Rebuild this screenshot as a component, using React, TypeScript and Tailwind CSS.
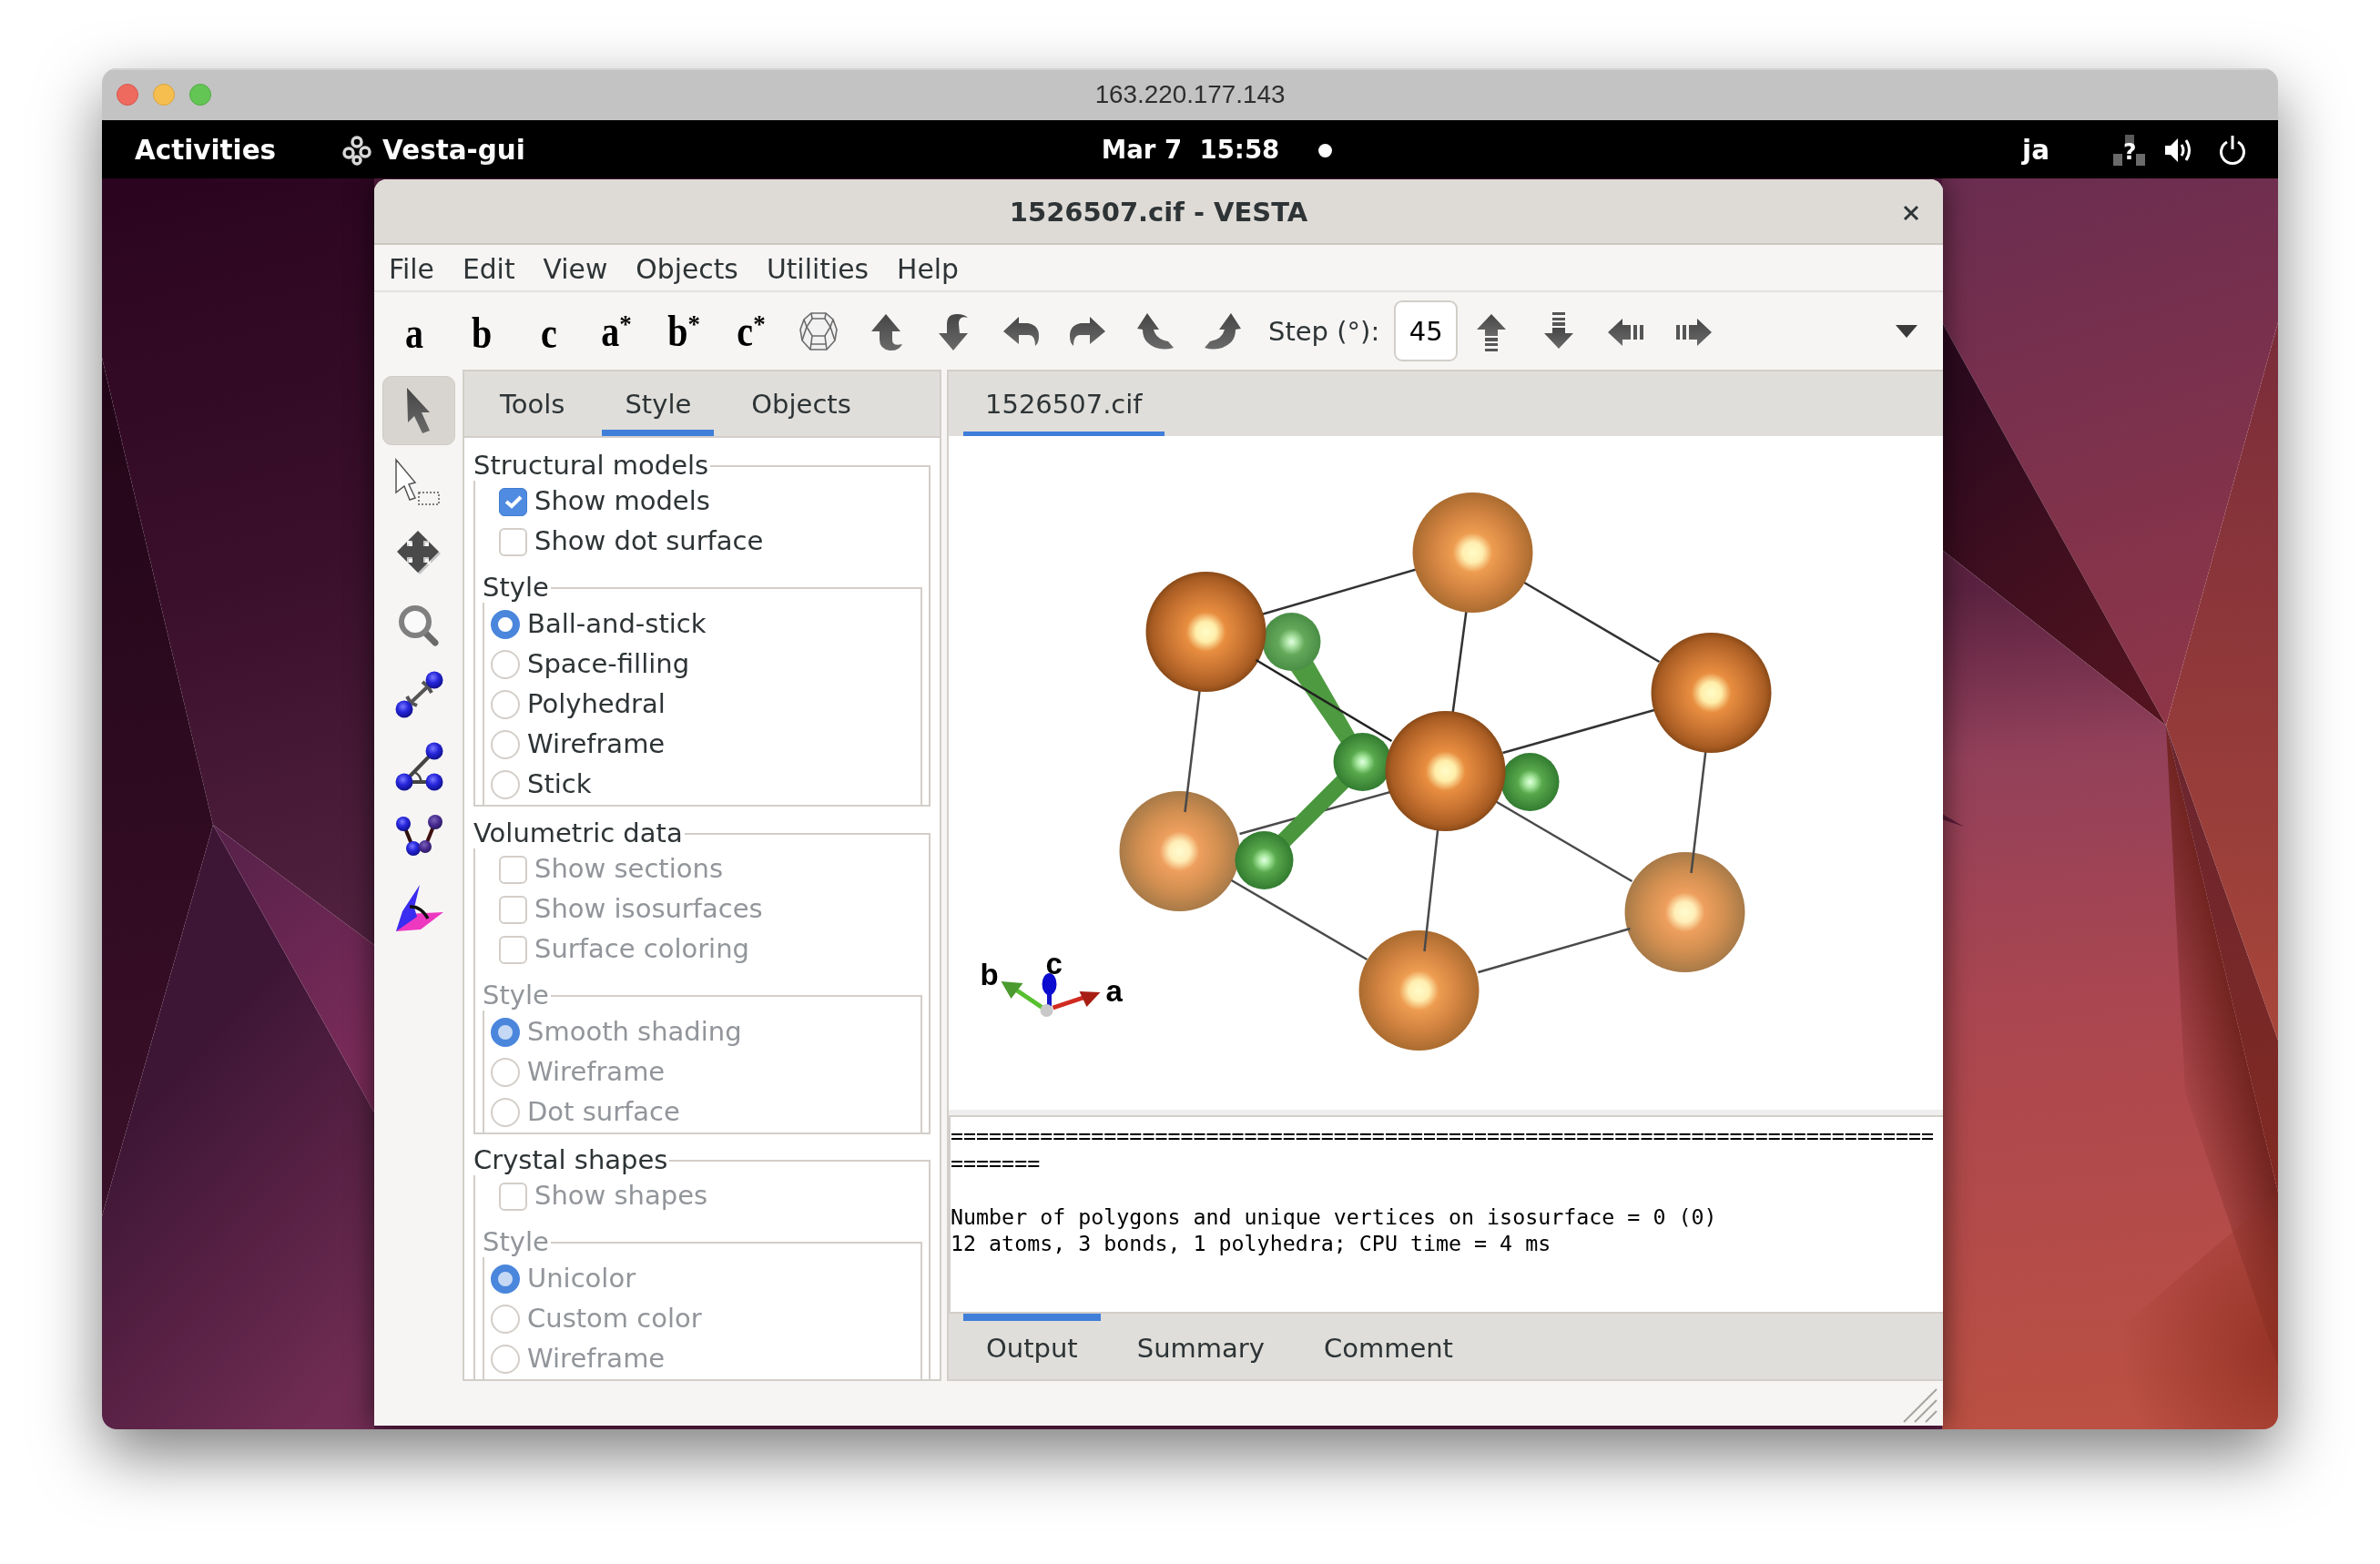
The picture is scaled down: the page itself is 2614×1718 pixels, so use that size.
const Frame = ({ label, disabled, inner, children, className }: { label: string; disabled?: boolean; inner?: boolean; children: React.ReactNode; className?: string }) => (
  <div className={`relative border-2 border-[#d3cec9] ${inner ? 'border-b-0 mx-[8px] mr-[7px] mt-[28px] pt-[17px]' : 'pt-[16px]'} ${className ?? ''}`}>
    <span className={`absolute left-[-2px] top-[-19px] h-[34px] pr-[2px] bg-white leading-[34px] whitespace-nowrap ${disabled ? 'text-[#92959a]' : 'text-[#2e3436]'}`}>{label}</span>
    {children}
  </div>
);

const Check = ({ label, checked, disabled }: { label: string; checked?: boolean; disabled?: boolean }) => (
  <div className={`flex items-center h-[44px] pl-[26px] ${disabled ? 'text-[#92959a]' : 'text-[#2e3436]'}`}>
    {checked ? (
      <span className="flex items-center justify-center w-[31px] h-[31px] rounded-[6px] bg-[#4f8be0] border border-[#3f7ccf]">
        <svg width="24" height="22" viewBox="0 0 24 22"><path d="M4 11 L10 16 L20 6" fill="none" stroke="#fff" strokeWidth="4" /></svg>
      </span>
    ) : (
      <span className="w-[31px] h-[31px] rounded-[6px] bg-white border-2 border-[#d3cec9]" />
    )}
    <span className="ml-[8px]">{label}</span>
  </div>
);

const Radio = ({ label, checked, disabled }: { label: string; checked?: boolean; disabled?: boolean }) => (
  <div className={`flex items-center h-[44px] pl-[7px] ${disabled ? 'text-[#92959a]' : 'text-[#2e3436]'}`}>
    {checked ? (
      <span className={`w-[32px] h-[32px] rounded-full border-[8px] border-[#4a86dc] ${disabled ? 'bg-[#c6d9f4]' : 'bg-white'}`} />
    ) : (
      <span className="w-[32px] h-[32px] rounded-full bg-white border-2 border-[#d3cec9]" />
    )}
    <span className="ml-[8px]">{label}</span>
  </div>
);

const Wallpaper = () => (
  <svg className="absolute inset-0 w-full h-full" viewBox="112 196 2390 1374" preserveAspectRatio="none">
    <defs>
      <linearGradient id="wlTop" gradientUnits="userSpaceOnUse" x1="200" y1="196" x2="411" y2="1040">
        <stop offset="0" stopColor="#2b0520" />
        <stop offset="0.5" stopColor="#3a0f2b" />
        <stop offset="1" stopColor="#522240" />
      </linearGradient>
      <linearGradient id="wlDark" gradientUnits="userSpaceOnUse" x1="112" y1="393" x2="180" y2="1336">
        <stop offset="0" stopColor="#220518" />
        <stop offset="1" stopColor="#3a1029" />
      </linearGradient>
      <linearGradient id="wlWedge" gradientUnits="userSpaceOnUse" x1="234" y1="906" x2="411" y2="1150">
        <stop offset="0" stopColor="#56214a" />
        <stop offset="1" stopColor="#792b58" />
      </linearGradient>
      <linearGradient id="wlLow" gradientUnits="userSpaceOnUse" x1="130" y1="1250" x2="400" y2="1500">
        <stop offset="0" stopColor="#3e1635" />
        <stop offset="1" stopColor="#702c53" />
      </linearGradient>
      <linearGradient id="wrTop" gradientUnits="userSpaceOnUse" x1="2200" y1="196" x2="2379" y2="797">
        <stop offset="0" stopColor="#6b2d50" />
        <stop offset="1" stopColor="#8f3648" />
      </linearGradient>
      <linearGradient id="wrDark" gradientUnits="userSpaceOnUse" x1="2133" y1="430" x2="2379" y2="797">
        <stop offset="0" stopColor="#2c0a1f" />
        <stop offset="1" stopColor="#55141f" />
      </linearGradient>
      <linearGradient id="wrWedge" gradientUnits="userSpaceOnUse" x1="2460" y1="354" x2="2480" y2="1143">
        <stop offset="0" stopColor="#7a2c3a" />
        <stop offset="1" stopColor="#a8463a" />
      </linearGradient>
      <linearGradient id="wrFold" gradientUnits="userSpaceOnUse" x1="2379" y1="797" x2="2502" y2="1310">
        <stop offset="0" stopColor="#6a2530" />
        <stop offset="1" stopColor="#822a22" />
      </linearGradient>
      <linearGradient id="wrLow" gradientUnits="userSpaceOnUse" x1="2230" y1="640" x2="2310" y2="1560">
        <stop offset="0" stopColor="#5a2240" />
        <stop offset="0.2" stopColor="#92405a" />
        <stop offset="0.5" stopColor="#aa4650" />
        <stop offset="1" stopColor="#bb5043" />
      </linearGradient>
      <linearGradient id="wrBand" gradientUnits="userSpaceOnUse" x1="2440" y1="1050" x2="2360" y2="1069">
        <stop offset="0" stopColor="#722420" stopOpacity="1" />
        <stop offset="1" stopColor="#722420" stopOpacity="0" />
      </linearGradient>
      <radialGradient id="wrCorner" gradientUnits="userSpaceOnUse" cx="2520" cy="1480" r="190">
        <stop offset="0" stopColor="#8e2e20" stopOpacity="0.9" />
        <stop offset="1" stopColor="#8e2e20" stopOpacity="0" />
      </radialGradient>
    </defs>
    <polygon points="112,196 411,196 411,1038 234,906 112,393" fill="url(#wlTop)" />
    <polygon points="112,393 234,906 112,1336" fill="url(#wlDark)" />
    <polygon points="234,906 411,1222 411,1570 112,1570 112,1336" fill="url(#wlLow)" />
    <polygon points="234,906 411,1038 411,1222" fill="url(#wlWedge)" />
    <rect x="411" y="196" width="1722" height="1374" fill="#5a1e44" />
    <polygon points="2133,196 2502,196 2502,354 2379,797 2133,354" fill="url(#wrTop)" />
    <polygon points="2133,354 2379,797 2133,604" fill="url(#wrDark)" />
    <polygon points="2133,604 2379,797 2502,1310 2502,1570 2133,1570" fill="url(#wrLow)" />
    <polygon points="2379,797 2502,1310 2502,1500 2400,1200" fill="url(#wrBand)" />
    <polygon points="2502,1310 2502,1570 2200,1570" fill="url(#wrCorner)" />
    <polygon points="2502,354 2379,797 2502,1143" fill="url(#wrWedge)" />
    <polygon points="2379,797 2502,1143 2502,1310" fill="url(#wrFold)" />
    <polygon points="2133,894 2157,908 2133,900" fill="#5c1c3a" />
  </svg>
);

const Defs = () => (
  <svg className="absolute w-0 h-0">
    <defs>
      <linearGradient id="ig" x1="0" y1="0" x2="0" y2="1">
        <stop offset="0" stopColor="#454545" />
        <stop offset="1" stopColor="#6a6a6a" />
      </linearGradient>
      <radialGradient id="ball" cx="0.42" cy="0.35" r="0.65">
        <stop offset="0" stopColor="#7878ff" />
        <stop offset="0.5" stopColor="#2626dc" />
        <stop offset="1" stopColor="#10108c" />
      </radialGradient>
      <radialGradient id="ballP" cx="0.42" cy="0.35" r="0.65">
        <stop offset="0" stopColor="#7a60b8" />
        <stop offset="0.6" stopColor="#45288e" />
        <stop offset="1" stopColor="#2a1a60" />
      </radialGradient>
      <radialGradient id="atomDark">
        <stop offset="0" stopColor="#fffcc8" />
        <stop offset="0.17" stopColor="#ffeeaa" />
        <stop offset="0.33" stopColor="#e88e40" />
        <stop offset="0.68" stopColor="#c47030" />
        <stop offset="0.9" stopColor="#a85c22" />
        <stop offset="1" stopColor="#8a4a18" />
      </radialGradient>
      <radialGradient id="atomMid">
        <stop offset="0" stopColor="#fffcc8" />
        <stop offset="0.17" stopColor="#ffeeb0" />
        <stop offset="0.33" stopColor="#ee9c50" />
        <stop offset="0.68" stopColor="#d08240" />
        <stop offset="1" stopColor="#ab6c30" />
      </radialGradient>
      <radialGradient id="atomLight">
        <stop offset="0" stopColor="#fffcd0" />
        <stop offset="0.17" stopColor="#ffeeb8" />
        <stop offset="0.33" stopColor="#ee9f5e" />
        <stop offset="0.68" stopColor="#d08e50" />
        <stop offset="1" stopColor="#a87a48" />
      </radialGradient>
      <radialGradient id="green">
        <stop offset="0" stopColor="#e2ffe2" />
        <stop offset="0.18" stopColor="#a8e8a0" />
        <stop offset="0.42" stopColor="#58a84c" />
        <stop offset="1" stopColor="#327c30" />
      </radialGradient>
      <radialGradient id="greenPale">
        <stop offset="0" stopColor="#e2ffe2" />
        <stop offset="0.2" stopColor="#a8e0a0" />
        <stop offset="0.45" stopColor="#64a85a" />
        <stop offset="1" stopColor="#4a8e46" />
      </radialGradient>
    </defs>
  </svg>
);

const Ic = ({ w = 44, children }: { w?: number; children: React.ReactNode }) => (
  <svg width={w} height="48" viewBox={`0 0 ${w} 48`}>{children}</svg>
);

const toolbarIcons = [
  <Ic key="poly">
    <g fill="none" stroke="#6b6b6b" strokeWidth="1.6">
      <polygon points="14,4 30,4 38,11 42,22 40,34 31,44 13,44 4,34 2,22 6,11" fill="#f2f2f2" />
      <polygon points="15,10 29,10 35,19 29,29 15,29 9,19" />
      <path d="M14 4 L15 10 M30 4 L29 10 M6 11 L9 19 M38 11 L35 19 M15 29 L13 44 M29 29 L31 44 M9 19 L4 34 M35 19 L40 34 M13 38 H31" />
    </g>
  </Ic>,
  <Ic key="up"><path d="M22 5 L38 24 L29 24 L29 33 Q29 41 40 38 Q36 46 26 45 Q15 43 15 33 L15 24 L6 24 Z" fill="url(#ig)" /></Ic>,
  <Ic key="down"><path d="M22 45 L6 26 L15 26 L15 16 Q15 5 26 5 Q34 5 38 9 Q28 6 28 16 L29 26 L38 26 Z" fill="url(#ig)" /></Ic>,
  <Ic key="left"><path d="M3 24 L20 8 L20 15 L30 15 Q42 17 42 29 Q42 37 38 40 Q38 27 30 28 L20 28 L20 38 Z" fill="url(#ig)" /></Ic>,
  <Ic key="right"><path d="M41 24 L24 8 L24 15 L14 15 Q2 17 2 29 Q2 37 6 40 Q6 27 14 28 L24 28 L24 38 Z" fill="url(#ig)" /></Ic>,
  <Ic key="ccw"><path d="M13 4 L26 22 L20 22 Q23 33 36 35 L42 42 Q25 47 13 36 Q8 31 8 22 L2 21 Z" fill="url(#ig)" /></Ic>,
  <Ic key="cw"><path d="M31 4 L18 22 L24 22 Q21 33 8 35 L2 42 Q19 47 31 36 Q36 31 36 22 L42 21 Z" fill="url(#ig)" /></Ic>,
];

const stepIcons = [
  <Ic key="su">
    <path d="M22 5 L38 22 L29 22 L29 29 L15 29 L15 22 L6 22 Z" fill="url(#ig)" />
    <path d="M15 31 H29 V35 H15 Z M15 37 H29 V40 H15 Z M15 43 H29 V46 H15 Z" fill="#555" />
  </Ic>,
  <Ic key="sd">
    <path d="M15 3 H29 V6 H15 Z M15 9 H29 V12 H15 Z M15 14 H29 V18 H15 Z" fill="#555" />
    <path d="M22 43 L38 26 L29 26 L29 20 L15 20 L15 26 L6 26 Z" fill="url(#ig)" />
  </Ic>,
  <Ic key="sl">
    <path d="M2 25 L18 10 L18 17 L27 17 L27 33 L18 33 L18 40 Z" fill="url(#ig)" />
    <path d="M30 17 H34 V33 H30 Z M37 17 H41 V33 H37 Z" fill="#555" />
  </Ic>,
  <Ic key="sr">
    <path d="M3 17 H7 V33 H3 Z M10 17 H14 V33 H10 Z" fill="#555" />
    <path d="M42 25 L26 10 L26 17 L17 17 L17 33 L26 33 L26 40 Z" fill="url(#ig)" />
  </Ic>,
];

const railIcons = [
  <path key="a" d="M26 12 L51 39 L42 39 L51 59 L43 62 L34 43 L27 50 Z" fill="url(#ig)" />,
  <g key="b">
    <path d="M15 13 L36 38 L29 40 L36 55 L30 57 L24 42 L15 49 Z" fill="#fff" stroke="#555" strokeWidth="1.5" />
    <rect x="40" y="49" width="22" height="13" fill="none" stroke="#555" strokeWidth="1.5" strokeDasharray="2 2" />
  </g>,
  <g key="c">
    <path d="M41 15 L52 26 L47 26 L47 32 L53 32 L53 27 L64 38 L53 49 L53 44 L47 44 L47 50 L52 50 L41 61 L30 50 L35 50 L35 44 L29 44 L29 49 L18 38 L29 27 L29 32 L35 32 L35 26 L30 26 Z" fill="#c4c4c4" />
    <path d="M39 13 L50 24 L45 24 L45 30 L51 30 L51 25 L62 36 L51 47 L51 42 L45 42 L45 48 L50 48 L39 59 L28 48 L33 48 L33 42 L27 42 L27 47 L16 36 L27 25 L27 30 L33 30 L33 24 L28 24 Z" fill="#4a4a4a" />
  </g>,
  <g key="d">
    <path d="M48 47 L58 57" stroke="#6a6a6a" strokeWidth="7" strokeLinecap="round" />
    <circle cx="36" cy="34" r="15" fill="#fafafa" stroke="#808080" strokeWidth="6" />
  </g>,
  <g key="e">
    <path d="M31 45 L50 27 M27 38 L31 45 L38 48 M44 22 L50 27 L54 34" fill="none" stroke="#555" strokeWidth="4" />
    <circle cx="57" cy="20" r="9.5" fill="url(#ball)" />
    <circle cx="24" cy="52" r="9.5" fill="url(#ball)" />
  </g>,
  <g key="f">
    <path d="M24 53 L57 19 M24 53 H57" stroke="#444" strokeWidth="4" />
    <path d="M35 42 Q43 46 42 53" fill="none" stroke="#444" strokeWidth="2.5" />
    <circle cx="57" cy="19" r="9.5" fill="url(#ball)" />
    <circle cx="24" cy="53" r="9.5" fill="url(#ball)" />
    <circle cx="57" cy="53" r="9.5" fill="url(#ball)" />
  </g>,
  <g key="g">
    <path d="M23 21 L34 48" stroke="#301010" strokeWidth="4" />
    <path d="M58 19 L47 46" stroke="#401010" strokeWidth="4" />
    <circle cx="23" cy="21" r="8" fill="url(#ball)" />
    <circle cx="34" cy="48" r="8" fill="url(#ball)" />
    <circle cx="47" cy="46" r="7" fill="url(#ballP)" />
    <circle cx="58" cy="19" r="8" fill="url(#ballP)" />
  </g>,
  <g key="h">
    <polygon points="26,41 67,39 42,58 15,60" fill="#ee38c0" />
    <polygon points="41,9 35,34 38,44 15,60 22,38" fill="#3a2cf0" />
    <path d="M30 33 Q42 32 50 46" fill="none" stroke="#111" strokeWidth="3.5" />
  </g>,
];

const atoms = [
  { x: 1324, y: 695, g: 'atomDark' },
  { x: 1617, y: 608, g: 'atomMid' },
  { x: 1879, y: 762, g: 'atomDark' },
];

const Structure = () => (
  <svg className="w-full h-full" viewBox="1042 480 1091 740">
    <circle cx="1295" cy="936" r="66" fill="url(#atomLight)" />
    <circle cx="1850" cy="1003" r="66" fill="url(#atomLight)" />
    <circle cx="1558" cy="1089" r="66" fill="url(#atomMid)" />
    <g stroke="#4a4a4a" strokeWidth="2.5" fill="none">
      <path d="M1317 760 L1301 893" />
      <path d="M1873 825 L1857 960" />
      <path d="M1580 900 L1564 1046" />
      <path d="M1640 880 L1792 969" />
      <path d="M1790 1021 L1623 1069" />
      <path d="M1352 968 L1501 1055" />
      <path d="M1361 917 L1530 870" />
    </g>
    <g stroke="#333" strokeWidth="2.5" fill="none">
      <path d="M1385 676 L1560 625" />
      <path d="M1672 640 L1822 728" />
      <path d="M1610 672 L1595 785" />
      <path d="M1650 828 L1820 780" />
    </g>
    <polygon points="1408,724 1434,714 1505,838 1487,838" fill="#4e9a40" />
    <path d="M1496 838 L1388 946" stroke="#4a963c" strokeWidth="18" />
    <circle cx="1418" cy="706" r="32" fill="url(#greenPale)" />
    <circle cx="1496" cy="838" r="32" fill="url(#green)" />
    <circle cx="1680" cy="860" r="32" fill="url(#green)" />
    <circle cx="1388" cy="946" r="32" fill="url(#green)" />
    {atoms.map((a) => (
      <circle key={a.x} cx={a.x} cy={a.y} r="66" fill={`url(#${a.g})`} />
    ))}
    <path d="M1379 726 L1528 815" stroke="#222" strokeWidth="2.5" />
    <circle cx="1587" cy="848" r="66" fill="url(#atomDark)" />
    <g>
      <path d="M1149 1111 L1112 1086" stroke="#58c030" strokeWidth="5" />
      <path d="M1099 1079 L1123 1081 L1110 1098 Z" fill="#4a9a30" />
      <path d="M1152 1108 L1152 1085" stroke="#1414c8" strokeWidth="5" />
      <ellipse cx="1152" cy="1082" rx="8" ry="12" fill="#0c0cd0" />
      <path d="M1156 1108 L1192 1096" stroke="#d02a20" strokeWidth="5" />
      <path d="M1208 1091 L1185 1090 L1193 1107 Z" fill="#a81e14" />
      <circle cx="1149" cy="1111" r="7" fill="#c8c8c8" />
      <g fontFamily="'Liberation Sans', sans-serif" fontWeight="700" fontSize="33" fill="#000">
        <text x="1076" y="1083">b</text>
        <text x="1148" y="1071">c</text>
        <text x="1214" y="1101">a</text>
      </g>
    </g>
  </svg>
);

export default function App() {
  return (
    <div className="w-[2614px] h-[1718px] bg-white pt-[75px] pl-[112px] overflow-hidden font-['DejaVu_Sans',sans-serif] text-[29px] blur-[0.6px]">
      <Defs />
      <div className="flex flex-col w-[2390px] h-[1495px] rounded-[16px] overflow-hidden shadow-[0_28px_70px_rgba(0,0,0,0.5)]">
        {/* mac title */}
        <div className="relative flex items-center justify-center h-[57px] pb-[2px] bg-[#c3c3c3] border-t-2 border-[#d2d2d2]">
          <div className="absolute left-[16px] flex gap-[16px]">
            <span className="w-[24px] h-[24px] rounded-full bg-[#ee6a5f] border border-[#d5574c]" />
            <span className="w-[24px] h-[24px] rounded-full bg-[#f5be4f] border border-[#d9a53c]" />
            <span className="w-[24px] h-[24px] rounded-full bg-[#62c554] border border-[#52ac45]" />
          </div>
          <span className="font-['Liberation_Sans',sans-serif] text-[27.8px] text-[#2e2e2e]">163.220.177.143</span>
        </div>

        {/* gnome top bar */}
        <div className="flex items-center h-[64px] pt-[2px] bg-black text-white font-bold text-[29.4px] pl-[36px] pr-[36px]">
          <span>Activities</span>
          <svg className="ml-[73px]" width="32" height="34" viewBox="0 0 32 34">
            <g fill="none" stroke="#d8d8d8" strokeWidth="3.5">
              <circle cx="16" cy="8" r="5" />
              <circle cx="7" cy="20" r="5" />
              <circle cx="25" cy="19" r="5" />
              <circle cx="16" cy="28" r="4" />
            </g>
          </svg>
          <span className="ml-[12px]">Vesta-gui</span>
          <span className="ml-[633px] whitespace-pre text-[27.6px]">Mar 7  15:58</span>
          <span className="ml-[43px] w-[15px] h-[15px] rounded-full bg-white" />
          <span className="ml-auto">ja</span>
          <svg className="ml-[70px]" width="35" height="34" viewBox="0 0 35 34">
            <rect x="13" y="0" width="10" height="11" fill="#5a5a5a" />
            <rect x="0" y="21" width="10" height="13" fill="#6a6a6a" />
            <rect x="25" y="21" width="10" height="13" fill="#6a6a6a" />
            <text x="11" y="27" fontSize="25" fill="#fff" fontWeight="700">?</text>
          </svg>
          <svg className="ml-[22px]" width="31" height="30" viewBox="0 0 31 30">
            <path d="M0 10 H6 L14 2 V28 L6 20 H0 Z" fill="#fff" />
            <path d="M18 9 Q22 15 18 21 M23 4 Q30 15 23 26" fill="none" stroke="#fff" strokeWidth="3" />
          </svg>
          <svg className="ml-[29px]" width="28" height="32" viewBox="0 0 28 32">
            <path d="M8 7 A12.5 12.5 0 1 0 20 7" fill="none" stroke="#fff" strokeWidth="3" />
            <path d="M14 0 V15" stroke="#fff" strokeWidth="3" />
          </svg>
        </div>

        {/* desktop */}
        <div className="relative flex-1 pl-[299px] pt-[1px]">
          <Wallpaper />
          <div className="relative flex flex-col w-[1723px] h-[1369px] rounded-t-[14px] overflow-hidden bg-[#f6f5f4] text-[#2e3436] shadow-[0_0_30px_rgba(0,0,0,0.6)]">
            <div className="relative flex items-center justify-center h-[72px] pt-[3px] bg-[#dedbd7] border-b-2 border-[#cdc7c2] font-bold">
              <span>1526507.cif - VESTA</span>
              <svg className="absolute right-[26px]" width="18" height="18" viewBox="0 0 18 18">
                <path d="M2 2 L16 16 M16 2 L2 16" stroke="#2e3436" strokeWidth="3" />
              </svg>
            </div>
            <div className="flex items-center gap-[31px] h-[52px] pl-[16px] pt-[4px] text-[29.8px] border-b-2 border-[#e4e2df]">
              {['File', 'Edit', 'View', 'Objects', 'Utilities', 'Help'].map((m) => (
                <span key={m}>{m}</span>
              ))}
            </div>

            {/* toolbar */}
            <div className="flex items-center h-[85px] pl-[7px] pr-[28px]">
              {[['a'], ['b'], ['c'], ['a', '*'], ['b', '*'], ['c', '*']].map(([l, s], i) => (
                <span key={i} className="w-[74px] pt-[5px] text-center font-['Liberation_Serif',serif] font-bold text-[40px] leading-[48px] text-black">
                  <span className="inline-block scale-y-[1.2]">{l}</span>
                  {s && <span className="relative top-[-12px] text-[27px]">{s}</span>}
                </span>
              ))}
              {toolbarIcons.map((ic, i) => (
                <span key={i} className="flex justify-center w-[74px]">{ic}</span>
              ))}
              <span className="ml-[13px] pt-[2px]">Step (°):</span>
              <span className="flex items-center justify-center ml-[16px] w-[70px] h-[67px] pt-[2px] rounded-[9px] bg-white border-2 border-[#d3cec9] text-black">45</span>
              <span className="flex">
                {stepIcons.map((ic, i) => (
                  <span key={i} className="flex justify-center w-[74px]">{ic}</span>
                ))}
              </span>
              <svg className="ml-auto" width="24" height="14" viewBox="0 0 24 14"><path d="M0 0 H24 L12 14 Z" fill="#3a3a3a" /></svg>
            </div>

            {/* body */}
            <div className="flex h-[1111px]">
              <div className="flex flex-col items-center w-[97px] pt-[7px]">
                {railIcons.map((ic, i) => (
                  <div key={i} className={`w-[80px] h-[76px] mb-[2.5px] rounded-[10px] ${i === 0 ? 'bg-[#d8d5d1] border border-[#cfcbc6]' : ''}`}>
                    <svg width="80" height="76" viewBox="0 0 80 76">{ic}</svg>
                  </div>
                ))}
              </div>

              {/* left notebook */}
              <div className="flex flex-col w-[526px] h-[1111px] border-2 border-[#d3cec9] overflow-hidden">
                <div className="flex items-stretch h-[73px] pl-[14px] gap-[16px] bg-[#dfdeda] border-b-2 border-[#d3cec9]">
                  <span className="flex items-center px-[25px] pt-[3px]">Tools</span>
                  <span className="flex items-center px-[25px] border-b-[7px] border-[#3f7ed9] pt-[10px]">Style</span>
                  <span className="flex items-center px-[25px] pt-[3px]">Objects</span>
                </div>
                <div className="flex-1 bg-white px-[10px] pt-[30px] overflow-hidden">
                  <Frame label="Structural models">
                    <Check label="Show models" checked />
                    <Check label="Show dot surface" />
                    <Frame label="Style" inner>
                      <Radio label="Ball-and-stick" checked />
                      <Radio label="Space-filling" />
                      <Radio label="Polyhedral" />
                      <Radio label="Wireframe" />
                      <Radio label="Stick" />
                    </Frame>
                  </Frame>
                  <Frame label="Volumetric data" className="mt-[29px]">
                    <Check label="Show sections" disabled />
                    <Check label="Show isosurfaces" disabled />
                    <Check label="Surface coloring" disabled />
                    <Frame label="Style" inner disabled>
                      <Radio label="Smooth shading" checked disabled />
                      <Radio label="Wireframe" disabled />
                      <Radio label="Dot surface" disabled />
                    </Frame>
                  </Frame>
                  <Frame label="Crystal shapes" className="mt-[28px]">
                    <Check label="Show shapes" disabled />
                    <Frame label="Style" inner disabled>
                      <Radio label="Unicolor" checked disabled />
                      <Radio label="Custom color" disabled />
                      <Radio label="Wireframe" disabled />
                    </Frame>
                  </Frame>
                </div>
              </div>

              {/* right notebook */}
              <div className="flex flex-col flex-1 ml-[6px] h-[1111px] border-2 border-r-0 border-[#d3cec9]">
                <div className="flex h-[71px] pl-[16px] bg-[#dfdeda]">
                  <span className="flex items-center px-[24px] border-b-[5px] border-[#3f7ed9] pt-[7px]">1526507.cif</span>
                </div>
                <div className="h-[740px] bg-white">
                  <Structure />
                </div>
                <div className="h-[6px] bg-[#efeeec]" />
                <div className="h-[218px] border-2 border-r-0 border-[#d3cec9] bg-white pt-[6px] font-['DejaVu_Sans_Mono',monospace] text-[23.3px] leading-[29.5px] text-black whitespace-pre">
                  {'='.repeat(77)}
                  {'\n=======\n\nNumber of polygons and unique vertices on isosurface = 0 (0)\n12 atoms, 3 bonds, 1 polyhedra; CPU time = 4 ms'}
                </div>
                <div className="flex flex-1 pl-[16px] gap-[15px] bg-[#dfdeda]">
                  <span className="flex items-center px-[25px] border-t-[8px] border-[#3f7ed9] pb-[3px]">Output</span>
                  <span className="flex items-center px-[25px] pt-[5px]">Summary</span>
                  <span className="flex items-center px-[25px] pt-[5px]">Comment</span>
                </div>
              </div>
            </div>

            {/* size grip */}
            <div className="flex flex-1 justify-end items-end pr-[6px] pb-[3px]">
              <svg width="38" height="38" viewBox="0 0 38 38">
                <path d="M1 37 L37 1 M13 37 L37 13 M25 37 L37 25" stroke="#a8a49f" strokeWidth="2" />
              </svg>
            </div>
          </div>
        </div>
      </div>
    </div>
  );
}
